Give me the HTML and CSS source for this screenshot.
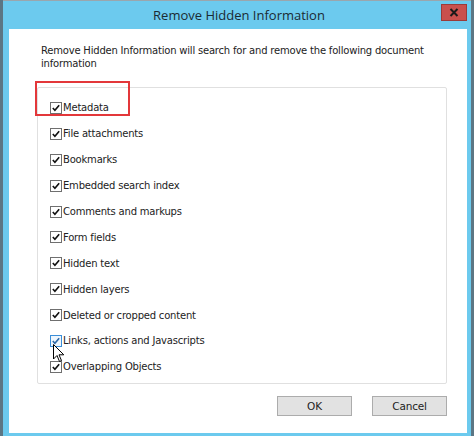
FILE: index.html
```html
<!DOCTYPE html>
<html>
<head>
<meta charset="utf-8">
<link rel="stylesheet" href="styles.css">
</head>
<body>
<div class="window">
  <div class="titlebar">
    <div class="spacer"></div>
    <div class="title">Remove Hidden Information</div>
    <svg class="cap-x" width="26" height="17" viewBox="0 0 26 17"><rect x="0.5" y="0.5" width="25" height="16" fill="#c9504d" stroke="#9a3b3a"/><path d="M9.5 5 L16.5 12 M16.5 5 L9.5 12" stroke="#1a1a1a" stroke-width="2"/></svg>
  </div>
  <div class="content">
    <p class="intro">Remove Hidden Information will search for and remove the following document information</p>
    <div class="group">
      <label class="item"><span class="cb"><svg viewBox="0 0 11 11"><path d="M2 5.5 L4.3 8 L9 2.5" fill="none" stroke="#111" stroke-width="1.8"/></svg></span>Metadata</label>
      <label class="item"><span class="cb"><svg viewBox="0 0 11 11"><path d="M2 5.5 L4.3 8 L9 2.5" fill="none" stroke="#111" stroke-width="1.8"/></svg></span>File attachments</label>
      <label class="item"><span class="cb"><svg viewBox="0 0 11 11"><path d="M2 5.5 L4.3 8 L9 2.5" fill="none" stroke="#111" stroke-width="1.8"/></svg></span>Bookmarks</label>
      <label class="item"><span class="cb"><svg viewBox="0 0 11 11"><path d="M2 5.5 L4.3 8 L9 2.5" fill="none" stroke="#111" stroke-width="1.8"/></svg></span>Embedded search index</label>
      <label class="item"><span class="cb"><svg viewBox="0 0 11 11"><path d="M2 5.5 L4.3 8 L9 2.5" fill="none" stroke="#111" stroke-width="1.8"/></svg></span>Comments and markups</label>
      <label class="item"><span class="cb"><svg viewBox="0 0 11 11"><path d="M2 5.5 L4.3 8 L9 2.5" fill="none" stroke="#111" stroke-width="1.8"/></svg></span>Form fields</label>
      <label class="item"><span class="cb"><svg viewBox="0 0 11 11"><path d="M2 5.5 L4.3 8 L9 2.5" fill="none" stroke="#111" stroke-width="1.8"/></svg></span>Hidden text</label>
      <label class="item"><span class="cb"><svg viewBox="0 0 11 11"><path d="M2 5.5 L4.3 8 L9 2.5" fill="none" stroke="#111" stroke-width="1.8"/></svg></span>Hidden layers</label>
      <label class="item"><span class="cb"><svg viewBox="0 0 11 11"><path d="M2 5.5 L4.3 8 L9 2.5" fill="none" stroke="#111" stroke-width="1.8"/></svg></span>Deleted or cropped content</label>
      <label class="item"><span class="cb hover"><svg viewBox="0 0 11 11"><path d="M2 5.5 L4.3 8 L9 2.5" fill="none" stroke="#2f6aa8" stroke-width="1.8"/></svg></span>Links, actions and Javascripts</label>
      <label class="item"><span class="cb"><svg viewBox="0 0 11 11"><path d="M2 5.5 L4.3 8 L9 2.5" fill="none" stroke="#111" stroke-width="1.8"/></svg></span>Overlapping Objects</label>
    </div>
    <div class="buttons">
      <button class="btn">OK</button>
      <button class="btn">Cancel</button>
    </div>
  </div>
  <div class="highlight"></div>
  <svg class="cursor" width="12" height="19" viewBox="0 0 12 19"><path d="M0.5 0.5 L0.5 15 L4 11.5 L6.5 17.5 L8.5 16.6 L6 10.8 L10.8 10.8 Z" fill="#fff" stroke="#000" stroke-width="1" stroke-linejoin="round"/></svg>
</div>
</body>
</html>
```
FILE: styles.css
```css
* { box-sizing: border-box; }
html, body { margin: 0; padding: 0; }
body {
  width: 474px;
  height: 436px;
  background: #5c7684;
  overflow: hidden;
}
.window {
  position: relative;
  margin-left: 3px;
  width: 468px;
  height: 436px;
  background: #6ccaee;
  border-top: 1px solid #9aa6ad;
  padding: 0 4px 3px 6px;
  display: flex;
  flex-direction: column;
  font-family: "DejaVu Sans", Verdana, sans-serif;
  letter-spacing: -0.2px;
}
.titlebar {
  height: 28px;
  display: grid;
  grid-template-columns: 26px 1fr 26px;
  align-items: start;
}
.title {
  font-family: "Open Sans", "Noto Sans", sans-serif;
  font-size: 13px;
  line-height: 18px;
  letter-spacing: 0;
  color: #1b2a33;
  text-align: center;
  margin-top: 5px;
  padding-left: 2px;
}
.cap-x {
  margin-top: 3px;
  display: block;
}
.content {
  flex: 1;
  background: #fff;
  padding: 15px 20px 0 28px;
  display: flex;
  flex-direction: column;
}
.intro {
  margin: 0 0 0 4px;
  font-size: 10px;
  line-height: 13px;
  color: #222;
  width: 410px;
}
.group {
  margin-top: 17px;
  height: 297px;
  border: 1px solid #e0e0e0;
  border-radius: 2px;
  padding: 7px 0 0 12px;
  display: flex;
  flex-direction: column;
}
.item {
  display: flex;
  align-items: center;
  height: 25.9px;
  font-size: 10px;
  color: #222;
}
.cb {
  width: 12px;
  height: 12px;
  border: 1px solid #6f6f6f;
  background: #fff;
  margin-right: 1px;
  flex: none;
  display: flex;
}
.cb svg { width: 10px; height: 10px; display: block; }
.cb.hover { border-color: #3b8ed8; background: #eef6fd; }
.buttons {
  margin-top: 12px;
  display: flex;
  justify-content: flex-end;
  gap: 20px;
}
.btn {
  width: 75px;
  height: 20px;
  border: 1px solid #acacac;
  background: #e2e2e2;
  font-family: "DejaVu Sans", Verdana, sans-serif;
  font-size: 10.5px;
  letter-spacing: -0.2px;
  color: #222;
  padding: 0;
}
.highlight {
  position: absolute;
  left: 32px;
  top: 80px;
  width: 95px;
  height: 35px;
  border: 2px solid #e3373a;
}
.cursor {
  position: absolute;
  left: 50px;
  top: 343px;
}
```
